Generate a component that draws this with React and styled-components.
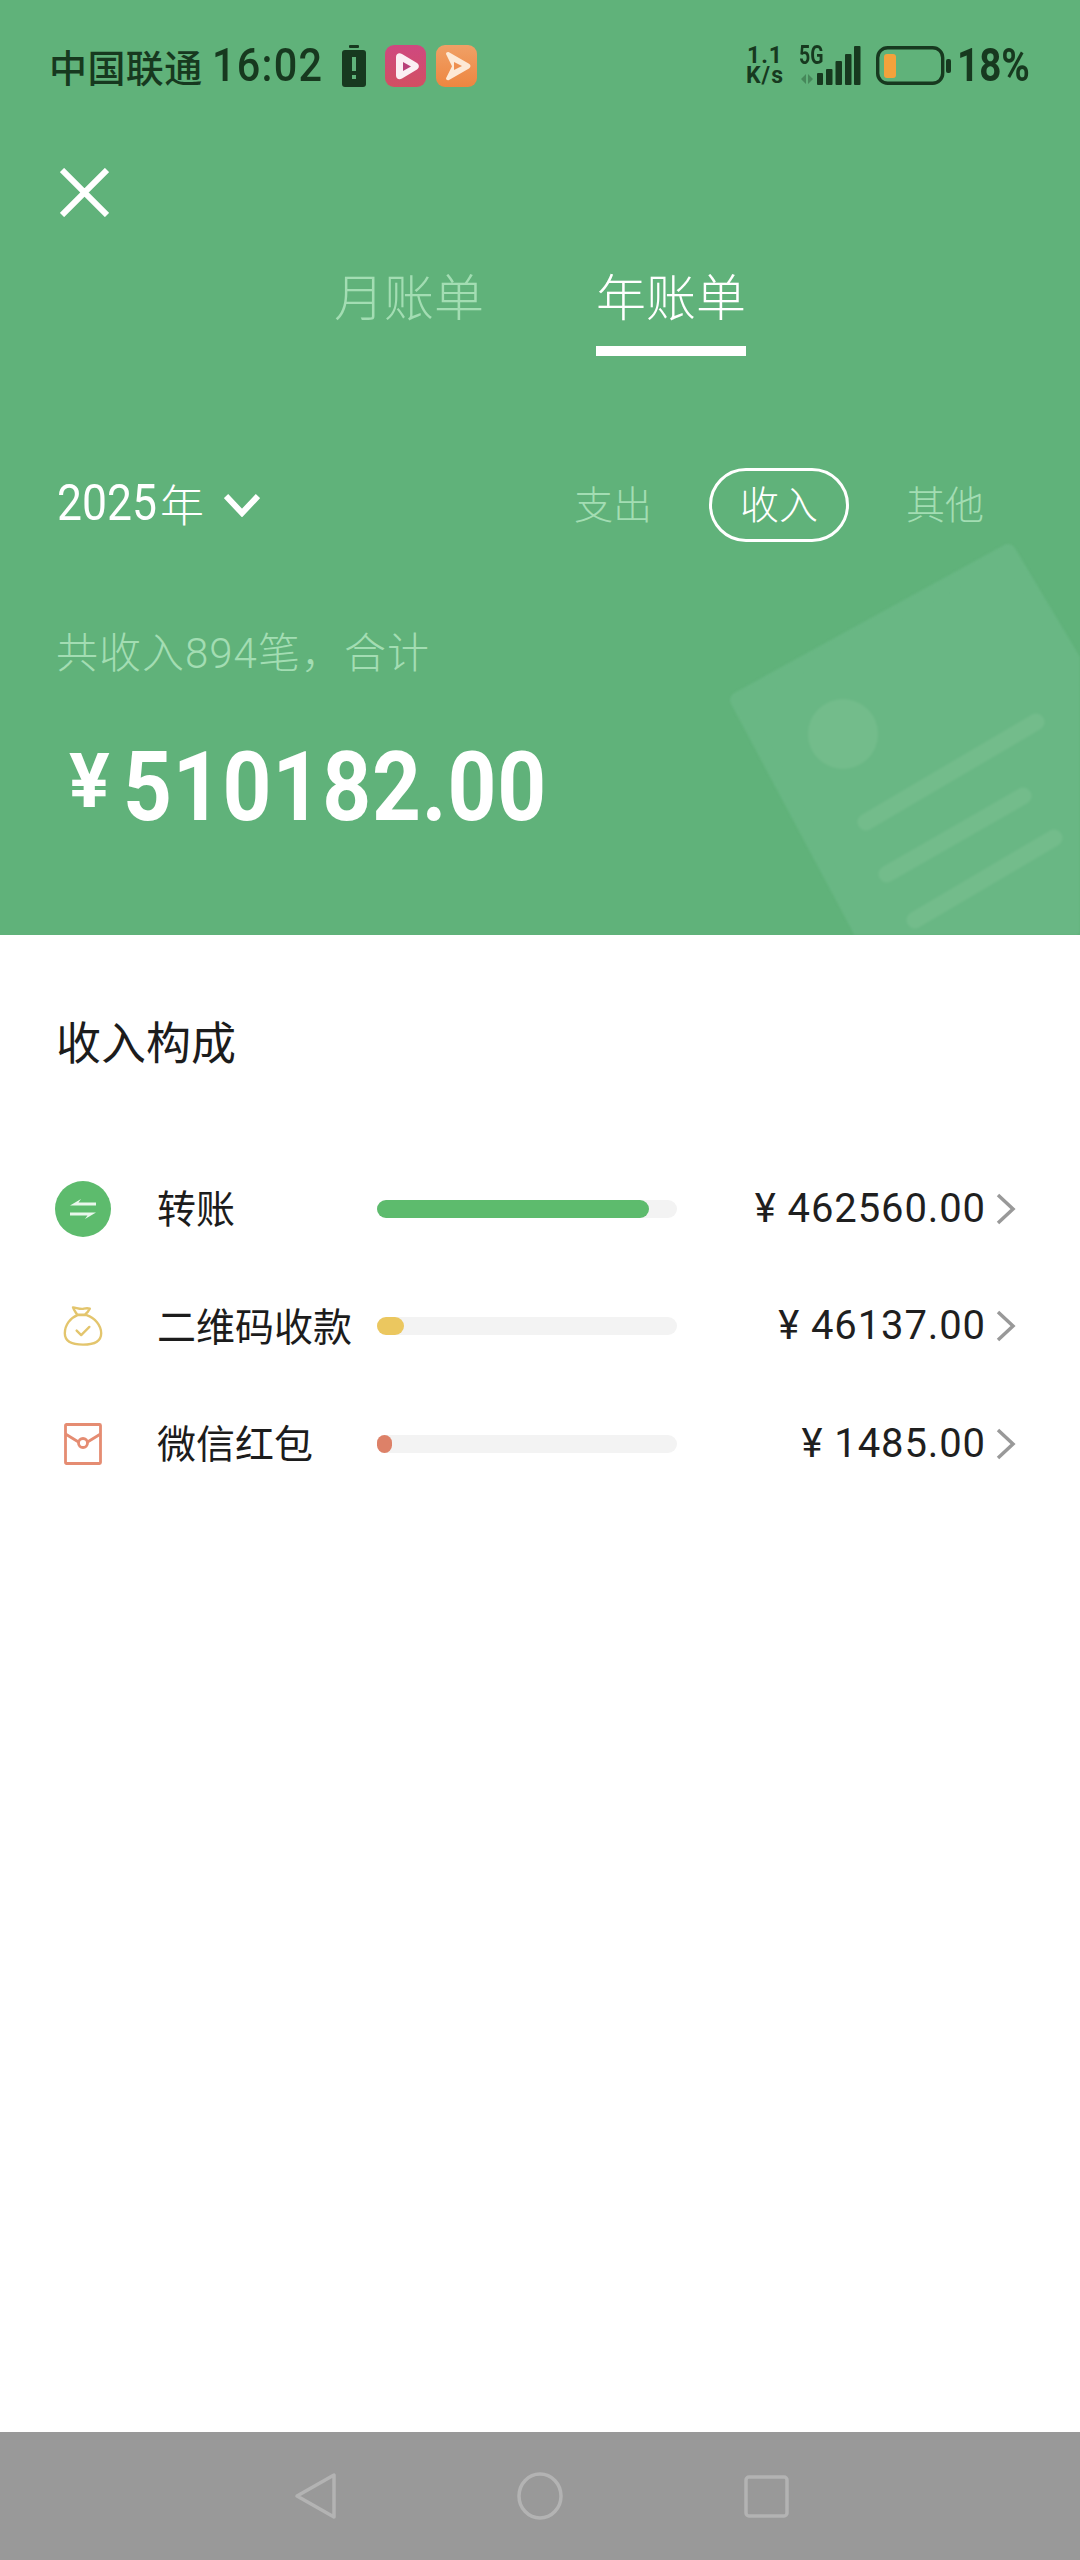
import styled, { createGlobalStyle } from "styled-components";

const GlobalStyle = createGlobalStyle`
  html, body {
    margin: 0;
    padding: 0;
    background: #fff;
  }
`;

const CJK = `"Noto Sans CJK SC", sans-serif`;
const DIGITS = `"Roboto", "Noto Sans CJK SC", sans-serif`;

const Page = styled.div`
  width: 1080px;
  height: 2560px;
  display: flex;
  flex-direction: column;
  overflow: hidden;
  font-family: ${CJK};
`;

const Header = styled.header`
  position: relative;
  height: 935px;
  flex: none;
  box-sizing: border-box;
  padding-top: 46px;
  background: #60b27a;
  overflow: hidden;
`;

const Decoration = styled.svg`
  position: absolute;
  right: 0;
  bottom: 0;
  filter: blur(1px);
`;

// the phone's digits are a narrow DIN, so Roboto gets squeezed to the same width
const Narrow = styled.span`
  display: inline-block;
  flex: none;
  width: ${(p) => p.$width}px;
  white-space: nowrap;
  transform: scaleX(${(p) => p.$scale});
  transform-origin: left center;
`;

const StatusBar = styled.div`
  position: relative;
  height: 39px;
  padding: 0 50px 0 49px;
  display: flex;
  align-items: center;
  justify-content: space-between;
  color: #17391f;
`;

const StatusGroup = styled.div`
  display: flex;
  align-items: center;
`;

const Carrier = styled.span`
  font-size: 38px;
  font-weight: 500;
  line-height: 39px;
  letter-spacing: 0.4px;
`;

const Clock = styled(Narrow)`
  margin-left: 9px;
  font-family: ${DIGITS};
  font-size: 46px;
  font-weight: 500;
  line-height: 39px;
  letter-spacing: 1.4px;
`;

const Speed = styled.div`
  width: 42px;
  margin-right: -2px;
  font-family: ${DIGITS};
  font-size: 23px;
  font-weight: 700;
  line-height: 20px;
  text-align: center;
  letter-spacing: 1px;
`;

const Signal = styled.div`
  position: relative;
  display: flex;
  margin-left: 15px;
`;

const FiveG = styled(Narrow)`
  position: absolute;
  top: -3px;
  left: 0;
  font-family: ${DIGITS};
  font-size: 25px;
  font-weight: 700;
  line-height: 25px;
`;

const Percent = styled(Narrow)`
  margin-left: 6px;
  font-family: ${DIGITS};
  font-size: 46px;
  font-weight: 700;
  line-height: 39px;
`;

const CloseButton = styled.div`
  position: relative;
  width: 49px;
  height: 49px;
  margin: 83px 0 0 60px;
`;

const Tabs = styled.nav`
  position: relative;
  display: flex;
  justify-content: center;
  gap: 112px;
  margin-top: 54px;
`;

const Tab = styled.div`
  width: 150px;
  height: 75px;
  font-size: 50px;
  line-height: 47px;
  text-align: center;
  font-weight: 300;
  color: ${(p) => (p.$active ? "#fff" : "#a3ddb3")};
  border-bottom: 10px solid ${(p) => (p.$active ? "#fff" : "transparent")};
`;

const FilterRow = styled.div`
  position: relative;
  display: flex;
  align-items: center;
  justify-content: space-between;
  height: 74px;
  margin-top: 112px;
  padding: 0 65px 0 57px;
`;

const YearPicker = styled.div`
  display: flex;
  align-items: center;
  color: #fff;
`;

const YearDigits = styled(Narrow)`
  padding-bottom: 4px;
  font-family: ${DIGITS};
  font-size: 50px;
  font-weight: 400;
  line-height: 60px;
`;

const YearUnit = styled.span`
  margin: 0 20px 4px 2px;
  font-size: 44px;
  font-weight: 300;
  line-height: 60px;
`;

const TypeList = styled.div`
  display: flex;
  gap: 26px;
`;

const TypeItem = styled.div`
  box-sizing: border-box;
  width: 140px;
  height: 74px;
  border-radius: 37px;
  border: 3.5px solid ${(p) => (p.$active ? "#fff" : "transparent")};
  font-size: 39px;
  font-weight: 300;
  line-height: 63px;
  text-align: center;
  color: ${(p) => (p.$active ? "#fff" : "#a3ddb3")};
`;

const Summary = styled.div`
  position: relative;
  margin: 89px 0 0 56px;
  font-family: ${DIGITS};
  font-size: 42px;
  font-weight: 300;
  line-height: 45px;
  letter-spacing: 1px;
  color: #a3ddb3;
`;

const Total = styled.div`
  position: relative;
  display: flex;
  align-items: flex-start;
  gap: 13px;
  margin: 75px 0 0 69px;
  font-family: ${DIGITS};
  font-weight: 700;
  color: #fff;
`;

const TotalSign = styled.span`
  font-size: 76px;
  line-height: 60px;
`;

const TotalValue = styled(Narrow)`
  font-size: 97px;
  line-height: 72px;
  letter-spacing: 0.95px;
`;

const Content = styled.main`
  flex: 1;
  background: #fff;
  padding-top: 82px;
`;

const SectionTitle = styled.h2`
  margin: 0 0 85px 56px;
  font-size: 45px;
  font-weight: 400;
  line-height: 48px;
  color: #1c1c1c;
`;

const Row = styled.div`
  display: grid;
  grid-template-columns: 102px 220px 300px 309px 30px;
  align-items: center;
  height: 117.5px;
  padding-left: 55px;
`;

const IconSlot = styled.div`
  display: flex;
  width: 56px;
  height: 56px;
  align-items: center;
  justify-content: center;
`;

const Label = styled.div`
  padding-bottom: 5px;
  font-size: 39px;
  line-height: 50px;
  color: #1c1c1c;
  white-space: nowrap;
`;

const Track = styled.div`
  height: 18px;
  border-radius: 9px;
  background: #f3f3f3;
`;

const Fill = styled.div`
  height: 100%;
  border-radius: 9px;
  background: ${(p) => p.$color};
`;

const Amount = styled.div`
  font-family: ${DIGITS};
  font-size: 40px;
  line-height: 50px;
  text-align: right;
  letter-spacing: 0.9px;
  color: #1f1f1f;
`;

const ChevronIcon = styled.svg`
  justify-self: end;
`;

const NavBar = styled.footer`
  height: 128px;
  flex: none;
  display: flex;
  justify-content: center;
  align-items: center;
  gap: 181px;
  padding-left: 2px;
  background: #999;
`;

const TransferIcon = () => (
  <svg width="56" height="56" viewBox="0 0 56 56">
    <circle cx="28" cy="28" r="28" fill="#5dbb6d" />
    <path d="M15 24.500h26v-3H23.500l2.500-3.500z" fill="#e9f7ec" />
    <path d="M41 31.500H15v3h17.500L30 38z" fill="#e9f7ec" />
  </svg>
);

const BagIcon = () => (
  <svg width="40" height="44" viewBox="0 0 44 46" fill="none" stroke="#e3c56d" strokeWidth="2.600" strokeLinejoin="round" strokeLinecap="round">
    <path d="M11 2.500c4 .5 8 2.500 12 1.500 2-.5 5-.5 6.500 0-1 2-3 4.500-5.500 6.500h-8.500c-1.500-2.500-3.500-5-4.500-8z" />
    <path d="M16 11C8 14 2 22 2 31c0 8 6 12.500 20 12.500S42 39 42 31c0-9-7-17-16-20z" />
    <path d="M15 28l5 5 9-9" />
  </svg>
);

const PacketIcon = () => (
  <svg width="38" height="42" viewBox="0 0 38 42" fill="none" stroke="#e58c72" strokeWidth="2.800">
    <rect x="1.500" y="1.500" width="35" height="39" rx="1" />
    <path d="M1.500 11l13 8M36.500 11l-13 8" />
    <circle cx="19" cy="20" r="4.500" />
  </svg>
);

const Chevron = () => (
  <ChevronIcon width="20" height="32" viewBox="0 0 20 32" fill="none" stroke="#999" strokeWidth="3.500">
    <path d="M2 2l15 14L2 30" />
  </ChevronIcon>
);

const rows = [
  { name: "转账", amount: "¥ 462560.00", width: 272, color: "#5dbb6d", Icon: TransferIcon },
  { name: "二维码收款", amount: "¥ 46137.00", width: 27, color: "#ebc75f", Icon: BagIcon },
  { name: "微信红包", amount: "¥ 1485.00", width: 15, color: "#dd8168", Icon: PacketIcon },
];

export default function App() {
  return (
    <Page>
      <GlobalStyle />
      <Header>
        <Decoration width="360" height="400" viewBox="720 535 360 400">
          <path d="M738 700L1008 552L1180 840L925 1050Z" fill="#69b784" stroke="#69b784" strokeWidth="16" strokeLinejoin="round" />
          <circle cx="843" cy="734" r="35" fill="#73bc8b" />
          <g stroke="#73bc8b" strokeWidth="17" strokeLinecap="round">
            <path d="M866 822L1036 722" />
            <path d="M887 874L1023 796" />
            <path d="M915 920L1054 838" />
          </g>
        </Decoration>

        <StatusBar>
          <StatusGroup>
            <Carrier>中国联通</Carrier>
            <Clock $width={111} $scale={0.9}>16:02</Clock>
            <svg width="24" height="42" viewBox="0 0 24 42" style={{ marginLeft: 19 }}>
              <rect x="7" y="0" width="10" height="3" rx="1" fill="#17391f" />
              <rect x="0" y="5" width="24" height="37" rx="3" fill="#17391f" />
              <rect x="10" y="12" width="4" height="14" fill="#60b27a" />
              <rect x="10" y="30" width="4" height="4" fill="#60b27a" />
            </svg>
            <svg width="41" height="42" viewBox="0 0 41 42" style={{ marginLeft: 19 }}>
              <defs>
                <linearGradient id="pinkApp" x1="0" y1="0" x2="0" y2="1">
                  <stop offset="0" stopColor="#cf4880" />
                  <stop offset="1" stopColor="#d24f62" />
                </linearGradient>
              </defs>
              <rect width="41" height="42" rx="9" fill="url(#pinkApp)" />
              <path d="M11 12c0-3 3-5 6-3l15 9c2.500 1.500 2.500 5 0 6.500l-15 9c-3 2-6 0-6-3z" fill="#fbeef3" />
              <path d="M18 17l8 4.500-8 4.500z" fill="#b8407a" />
            </svg>
            <svg width="41" height="42" viewBox="0 0 41 42" style={{ marginLeft: 10 }}>
              <defs>
                <linearGradient id="orangeApp" x1="0" y1="0" x2="0" y2="1">
                  <stop offset="0" stopColor="#f0a066" />
                  <stop offset="1" stopColor="#ee8640" />
                </linearGradient>
              </defs>
              <rect width="41" height="42" rx="9" fill="url(#orangeApp)" />
              <path d="M10 9c0-1.500 1.500-2.500 3-1.700l20 11.500c2 1.200 2 3.400 0 4.600L13 35c-1.500.8-3-.2-3-1.700l6-12z" fill="#fde9d6" />
              <path d="M18 17l8 4-8 4z" fill="#ee8f4f" />
            </svg>
          </StatusGroup>
          <StatusGroup>
            <Speed>
              1.1
              <br />
              K/s
            </Speed>
            <Signal>
              <FiveG $width={27} $scale={0.78}>5G</FiveG>
              <svg width="62" height="39" viewBox="0 0 62 39">
                <path d="M2 33l5-5v10zM9 28l5 5-5 5z" fill="#17391f" opacity="0.35" />
                <g fill="#17391f">
                  <rect x="18" y="27" width="6" height="12" rx="1" />
                  <rect x="27" y="23" width="6.500" height="16" rx="1" />
                  <rect x="36.500" y="15" width="6.500" height="24" rx="1" />
                  <rect x="46" y="8" width="6.500" height="31" rx="1" />
                  <rect x="55" y="0" width="6.500" height="39" rx="1" />
                </g>
              </svg>
            </Signal>
            <svg width="75" height="39" viewBox="0 0 75 39" style={{ marginLeft: 15 }}>
              <rect x="1.700" y="1.700" width="65" height="35.600" rx="10" fill="none" stroke="#17391f" strokeWidth="3.400" />
              <rect x="8" y="8" width="12" height="24" rx="3" fill="#f4a23c" />
              <rect x="70" y="13" width="5" height="14" rx="2" fill="#17391f" />
            </svg>
            <Percent $width={73} $scale={0.84}>18%</Percent>
          </StatusGroup>
        </StatusBar>

        <CloseButton>
          <svg width="49" height="49" viewBox="0 0 49 49" stroke="#fff" strokeWidth="6">
            <path d="M2 2l45 45M47 2L2 47" />
          </svg>
        </CloseButton>

        <Tabs>
          <Tab>月账单</Tab>
          <Tab $active>年账单</Tab>
        </Tabs>

        <FilterRow>
          <YearPicker>
            <YearDigits $width={101} $scale={0.89}>2025</YearDigits>
            <YearUnit>年</YearUnit>
            <svg width="36" height="24" viewBox="0 0 36 24" fill="none" stroke="#fff" strokeWidth="6">
              <path d="M2 3l16 17L34 3" />
            </svg>
          </YearPicker>
          <TypeList>
            <TypeItem>支出</TypeItem>
            <TypeItem $active>收入</TypeItem>
            <TypeItem>其他</TypeItem>
          </TypeList>
        </FilterRow>

        <Summary>共收入894笔，合计</Summary>

        <Total>
          <TotalSign>¥</TotalSign>
          <TotalValue $width={420} $scale={0.88}>510182.00</TotalValue>
        </Total>
      </Header>

      <Content>
        <SectionTitle>收入构成</SectionTitle>
        {rows.map(({ name, amount, width, color, Icon }) => (
          <Row key={name}>
            <IconSlot>
              <Icon />
            </IconSlot>
            <Label>{name}</Label>
            <Track>
              <Fill $color={color} style={{ width }} />
            </Track>
            <Amount>{amount}</Amount>
            <Chevron />
          </Row>
        ))}
      </Content>

      <NavBar>
        <svg width="42" height="48" viewBox="0 0 42 48" fill="none" stroke="#b3b3b3" strokeWidth="3.500" strokeLinejoin="round">
          <path d="M40 3v42L3 24z" />
        </svg>
        <svg width="46" height="48" viewBox="0 0 46 48" fill="none" stroke="#b3b3b3" strokeWidth="3.500">
          <ellipse cx="23" cy="24" rx="21" ry="22" />
        </svg>
        <svg width="45" height="43" viewBox="0 0 45 43" fill="none" stroke="#b3b3b3" strokeWidth="3.500">
          <rect x="2" y="2" width="41" height="39" rx="3" />
        </svg>
      </NavBar>
    </Page>
  );
}
